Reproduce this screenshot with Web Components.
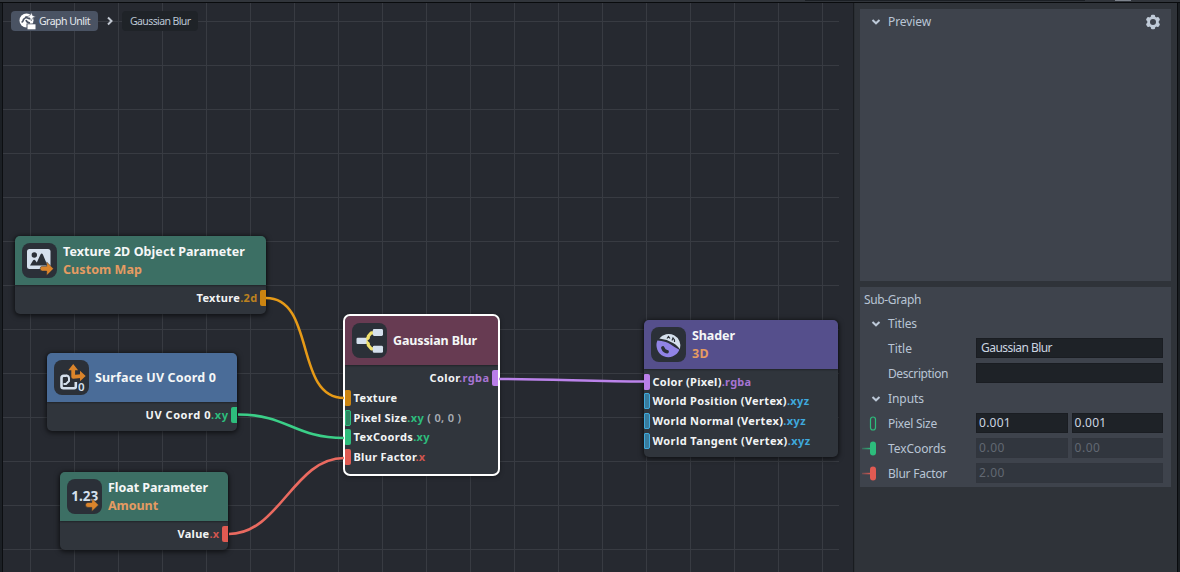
<!DOCTYPE html>
<html lang="en">
<head>
<meta charset="utf-8">
<title>Shader graph</title>
<style>
html,body{margin:0;height:100%;overflow:hidden;background:#2d3137}
body{font-family:"Noto Sans",sans-serif}
</style>
</head>
<body>
<graph-app></graph-app>
<script>
const define = (name, html, setup) => customElements.define(name, class extends HTMLElement {
  connectedCallback() {
    if (this.shadowRoot) return;
    const t = document.createElement('template');
    t.innerHTML = typeof html === 'function' ? html(this) : html;
    this.attachShadow({mode: 'open'}).append(t.content.cloneNode(true));
    if (setup) setup(this);
  }
});

/* glyphs, each drawn inside a 35px tile */
const icons = {
  image: `<rect x="5" y="6" width="23.500" height="20" rx="2.500" fill="#d5e0ed"/><circle cx="12.300" cy="12" r="2.700" fill="#2b3038"/><path d="M8 22.500l3-5q1.200-1.500 2.400 0l1.400 2 3.700-8q1.200-2 2.400 0l4.600 11z" fill="#2b3038"/><path d="M20.500 23.300h4.200v-4.300l6.800 6.700-6.800 6.700v-4.300h-4.200a2.400 2.400 0 0 1 0-4.800z" fill="#da842b" stroke="#2b3038" stroke-width=".5"/>`,
  uv: `<path d="M12.500 15.700H9.700q-2.200 0-2.200 2.200v8.300q0 2 2 2h10.700q1.600 0 1.600-1.600V22" fill="none" stroke="#d5e0ed" stroke-width="2.600"/><path d="M12 15.500q3 0 3 3v2.500l-3 3h-2.500" fill="none" stroke="#d5e0ed" stroke-width="2"/><circle cx="11.800" cy="19" r="1.500" fill="#2b3038"/><path d="M19.200 9.500v7.300q0 0 7.500-.6" stroke="#da842b" stroke-width="3.800" stroke-linejoin="round" fill="none"/><path d="M19.200 4l4.900 6.200h-9.800zM31.700 16l-5.700 5.200v-10.400z" fill="#da842b"/><text x="24" y="30.800" font-size="11.500" font-weight="600" font-family="Noto Sans" fill="#d5e0ed">0</text>`,
  number: `<text x="4.200" y="22" font-size="13.500" font-weight="700" font-family="Noto Sans" fill="#d5e0ed" textLength="27" lengthAdjust="spacingAndGlyphs">1.23</text><path d="M21 23.400h3.800v-4.200l6.800 6.700-6.800 6.700v-4.200H21a2.500 2.500 0 0 1 0-5z" fill="#da842b" stroke="#2b3038" stroke-width=".6"/>`,
  branch: `<path d="M13 17.800l3.300-3v-1.500l3-3.500h2.500M13 17.800l3.300 3v1.500l3 3.500h2.500" fill="none" stroke="#efdf6c" stroke-width="3.200" stroke-linejoin="round"/><g fill="#d5e0ed"><rect x="4.500" y="14.800" width="10" height="6.200" rx="1.200"/><rect x="20.800" y="6" width="10.200" height="7" rx="1.400"/><rect x="20.800" y="22.800" width="10.200" height="7" rx="1.400"/></g>`,
  shader: `<path d="M8.300 11.600A11.800 11.800 0 0 1 28.900 22.300Q27.500 19.500 22.500 16.200 16 12.500 8.300 11.600z" fill="#d5e0ed"/><path d="M16 11.500l1.500-2 1.500 2M21 13.500l1-2.500 1.500 2v2" fill="none" stroke="#2b3038" stroke-width="1.200"/><path d="M6.400 13.500Q15 14 19 17q4.500 3.300 9.400 5.800A11.700 11.700 0 0 1 6.400 13.500z" fill="#9184e6"/><path d="M11.800 20.800q1.300 3.600 4.400 3.900" fill="none" stroke="#2b3038" stroke-width="3.400" stroke-linecap="round"/>`
};
const hues = {green: '#3c6f64', blue: '#4a6c98', plum: '#673b52', violet: '#554f8c'};

/* app frame */
define('graph-app', `
<style>
:host{display:flex;flex-direction:column;width:1180px;height:572px;background:#2e3238}
.top{height:2px;flex:none;background:#31353b;display:flex;justify-content:flex-end}
.top i{display:block;height:1px;background:#1c2025;width:280px;margin-right:30px}
.top b{display:block;height:1px;width:16px;background:#7d838c;margin-right:49px}
.main{flex:1;display:flex;border-top:1px solid #090b0d;min-height:0}
.edge{width:3px;background:linear-gradient(90deg,#1b1f24 2px,#0c0e11 2px)}
graph-canvas{flex:1}
side-panel{width:324px;flex:none}
.right{width:3px;background:linear-gradient(90deg,#090b0e 1px,#1a1e22 1px)}
</style>
<div class="top"><i></i><b></b></div>
<div class="main"><div class="edge"></div><graph-canvas></graph-canvas><side-panel></side-panel><div class="right"></div></div>`);

/* node canvas; child coordinates are in window space */
define('graph-canvas', `
<style>
:host{display:block;position:relative;overflow:hidden;background:#262930}
.space{position:absolute;left:-3px;top:-3px;width:860px;height:572px}
.grid,.wires{position:absolute;left:0;top:0}
.crumbs{position:absolute;left:11px;top:11px;display:flex;align-items:center}
.crumbs>svg{width:8px;height:10px;margin:0 8px 0 8px}
graph-node{position:absolute}
</style>
<div class="space">
<svg class="grid" width="860" height="572"><defs><pattern id="g" x="30" y="21" width="44" height="44" patternUnits="userSpaceOnUse"><path d="M0 0h44v1H0zM0 0h1v44H0z" fill="#383b42"/></pattern></defs><rect width="839" height="572" fill="url(#g)"/></svg>
<div class="crumbs"><crumb-item icon w="51">Graph Unlit</crumb-item>
<svg viewBox="0 0 8 10"><path d="M2 1.500L5.500 5 2 8.500" fill="none" stroke="#c2c8d2" stroke-width="2"/></svg>
<crumb-item plain w="60.500">Gaussian Blur</crumb-item></div>
<graph-node style="left:15px;top:236px;width:251px" hue="green" icon="image"><fit-text slot="title" w="182">Texture 2D Object Parameter</fit-text><fit-text slot="sub" w="79">Custom Map</fit-text>
<pin-row out color="#cb8411" w="61" text="Texture" type=".2d" tint="#bd821f"></pin-row></graph-node>
<graph-node style="left:47px;top:353px;width:190px" hue="blue" icon="uv"><fit-text slot="title" w="121">Surface UV Coord 0</fit-text>
<pin-row out color="#2dbd7c" w="83" text="UV Coord 0" type=".xy"></pin-row></graph-node>
<graph-node style="left:60px;top:472px;width:168px" hue="green" icon="number"><fit-text slot="title" w="100">Float Parameter</fit-text><fit-text slot="sub" w="50">Amount</fit-text>
<pin-row out color="#e05a52" w="42" text="Value" type=".x" tint="#d0564f"></pin-row></graph-node>
<graph-node selected style="left:345px;top:316px;width:153px" hue="plum" icon="branch"><fit-text slot="title" w="84">Gaussian Blur</fit-text>
<pin-row out color="#b97ee8" w="60" text="Color" type=".rgba" tint="#a674d2"></pin-row>
<pin-row color="#cb8411" w="44" text="Texture"></pin-row>
<pin-row hollow color="#2dbd7c" w="108" text="Pixel Size" type=".xy" note=" ( 0, 0 )"></pin-row>
<pin-row color="#2dbd7c" w="76.500" text="TexCoords" type=".xy"></pin-row>
<pin-row color="#e05a52" w="72" text="Blur Factor" type=".x" tint="#d0564f"></pin-row></graph-node>
<graph-node style="left:644px;top:320px;width:194px" hue="violet" icon="shader"><fit-text slot="title" w="43">Shader</fit-text><fit-text slot="sub" w="17">3D</fit-text>
<pin-row color="#b97ee8" w="99" text="Color (Pixel)" type=".rgba" tint="#a674d2"></pin-row>
<pin-row hollow color="#3fa9dc" w="157" text="World Position (Vertex)" type=".xyz"></pin-row>
<pin-row hollow color="#3fa9dc" w="153.500" text="World Normal (Vertex)" type=".xyz"></pin-row>
<pin-row hollow color="#3fa9dc" w="158" text="World Tangent (Vertex)" type=".xyz"></pin-row></graph-node>
<svg class="wires" width="860" height="572" fill="none" stroke-width="2.600">
<path d="M266 298C316 298 294 398 344 398" stroke="#e69a17"/>
<path d="M238 414.500C288 414.500 294 438 344 438" stroke="#3bcf88"/>
<path d="M229 534C279 534 294 458 344 458" stroke="#ea6a60"/>
<path d="M499 379C550 379 594 381.500 645 381.500" stroke="#bb83ea"/></svg>
</div>`);

define('crumb-item', el => `
<style>
:host{display:flex;align-items:center;height:20px;border-radius:4px;padding:0 8px;background:#4a5363;color:#e8ebf0;font-size:10.500px;white-space:nowrap;box-sizing:border-box}
:host([plain]){background:#1f2328;color:#bcc6d4;padding:0 7px 0 8px}
svg{width:18px;height:18px;margin-right:2px}
</style>
${el.hasAttribute('icon') ? `<svg viewBox="0 0 18 18"><circle cx="7.500" cy="8.500" r="7" fill="#fff"/><path d="M2.500 10q1.500 0 2-2.500l3.500-3M7 8q.500 2.500 4 3M6 5l5 2" fill="none" stroke="#4a5363" stroke-width="1.600"/><path d="M12.300.5l1.300 3 3 1.200-3 1.200-1.300 3-1.300-3-3-1.200 3-1.200z" fill="#fff" stroke="#4a5363" stroke-width=".5"/><rect x="7.500" y="11.500" width="9.500" height="6" fill="#4a5363"/><rect x="8.500" y="12.300" width="8" height="5" fill="#fff"/></svg>` : ''}
<fit-text w="${el.getAttribute('w')}"><slot></slot></fit-text>`);

define('graph-node', el => `
<style>
:host{display:block;border-radius:5px;background:#30353c;box-shadow:0 1px 5px 1px #0009;font-weight:700}
:host([selected]){outline:2px solid #fff;outline-offset:0}
header{height:49px;box-sizing:border-box;border-radius:5px 5px 0 0;background:${hues[el.getAttribute('hue')]};display:flex;align-items:center;padding:0 7px;gap:6px;box-shadow:0 1px 2px #0005}
.tile{width:35px;height:35px;border-radius:8px;background:#2b3038;flex:none}
.names{display:flex;flex-direction:column;align-items:flex-start;font-size:12.500px;line-height:17.500px;color:#f5f7f7}
::slotted([slot=sub]){color:#e59b62}
section{padding:2.700px 0 6.300px}
:host([selected]) section{padding:3.200px 0 6.800px}
</style>
<header><svg class="tile" viewBox="0 0 35 35">${icons[el.getAttribute('icon')]}</svg>
<div class="names"><slot name="title"></slot><slot name="sub"></slot></div></header>
<section><slot></slot></section>`);

define('pin-row', el => {
  const a = n => el.getAttribute(n) || '', c = a('color');
  return `
<style>
:host{display:flex;align-items:center;height:19.800px;gap:2.500px;font-size:11px;line-height:16px;color:#f2f4f5}
:host([out]){flex-direction:row-reverse;padding:0}
i{width:6px;height:16px;box-sizing:border-box;border-radius:1px 2px 2px 1px;background:${c};flex:none}
:host([out]) i{border-radius:2px 0 0 2px}
:host([hollow]) i{border:1px solid ${c};background:color-mix(in srgb,${c} 60%,#30353c)}
.type{color:${a('tint') || c}}
.note{color:#a9aeb5;font-weight:600}
</style>
<i></i><fit-text w="${a('w')}">${a('text')}<span class="type">${a('type')}</span><span class="note">${a('note')}</span></fit-text>`;
});

const chevron = `<svg class="chev" viewBox="0 0 10 6"><path d="M1.500 1L5 4.300 8.500 1" fill="none" stroke="#bdc9d8" stroke-width="2"/></svg>`;

/* inspector column */
define('side-panel', `
<style>
:host{display:flex;flex-direction:column;gap:6px;border-left:1px solid #191c20;box-shadow:inset 1px 0 #2a2e33;padding:6px 6px 0 6px;box-sizing:border-box;background:#2f3339;color:#b9c5d5;font-size:12px;line-height:16px}
.card{background:#3e434c;box-sizing:border-box}
.preview{height:272px}
.sub{height:200px}
.bar{display:flex;align-items:center;height:25px;padding:0 10px 0 11px}
.bar fit-text{margin-left:7px}
.chev{width:10px;height:6px;flex:none}
.gear{width:16px;height:16px;margin-left:auto}
.name{height:24px;box-sizing:border-box;display:flex;align-items:center;padding:1px 0 0 4px}
</style>
<div class="card preview"><div class="bar">${chevron}<fit-text w="43">Preview</fit-text>
<svg class="gear" viewBox="-8 -8 16 16"><g fill="#c0cbd8"><circle r="5.800"/><rect x="-2.100" y="-7.300" width="4.200" height="14.600" rx="1.400"/><rect x="-2.100" y="-7.300" width="4.200" height="14.600" rx="1.400" transform="rotate(60)"/><rect x="-2.100" y="-7.300" width="4.200" height="14.600" rx="1.400" transform="rotate(120)"/></g><circle r="3" fill="#3e434c"/></svg></div></div>
<div class="card sub">
<div class="name"><fit-text w="57">Sub-Graph</fit-text></div>
<prop-row fold label="Titles" w="29"></prop-row>
<prop-row label="Title" w="24" values="Gaussian Blur:71"></prop-row>
<prop-row label="Description" w="60" values=" :0"></prop-row>
<prop-row fold label="Inputs" w="36"></prop-row>
<prop-row pin="#2dbd7c" hollow label="Pixel Size" w="49" values="0.001:32,0.001:32"></prop-row>
<prop-row pin="#2dbd7c" off label="TexCoords" w="58" values="0.00:26,0.00:26"></prop-row>
<prop-row pin="#e05a52" off label="Blur Factor" w="59" values="2.00:26"></prop-row>
</div>`);

define('prop-row', el => {
  const c = el.getAttribute('pin'), hollow = el.hasAttribute('hollow');
  const mark = c ? (hollow
    ? `<svg viewBox="0 0 28 25"><rect x="10.500" y="6" width="5" height="13" rx="2.500" fill="none" stroke="${c}" stroke-width="1.200"/></svg>`
    : `<svg viewBox="0 0 28 25"><defs><linearGradient id="f"><stop stop-color="${c}" stop-opacity=".3"/><stop offset="1" stop-color="${c}"/></linearGradient></defs><rect x="2" y="11.800" width="9" height="1.500" fill="url(#f)"/><rect x="10" y="5.500" width="6" height="14" rx="3" fill="${c}"/></svg>`)
    : el.hasAttribute('fold') ? chevron : '';
  const fields = (el.getAttribute('values') || '').split(',').filter(Boolean).map(v => {
    const [t, w] = v.split(':');
    return `<div class="field">${t.trim() ? `<fit-text w="${w}">${t}</fit-text>` : ''}</div>`;
  }).join('');
  return `
<style>
:host{display:flex;height:25px;align-items:center}
.mark{width:28px;height:25px;flex:none;display:flex;align-items:center}
.mark svg{width:28px;height:25px;flex:none}
.mark .chev{width:10px;height:6px;margin-left:11px}
.label{width:88px;flex:none}
.fields{display:flex;gap:4px;flex:1;margin:-1px 8px 0 0}
.field{flex:1;height:20px;box-sizing:border-box;padding-left:${/[a-z]/i.test(fields.replace(/<[^>]*>/g, '')) ? 4 : 2}px;background:#1e2227;border:1px solid #1a1d22;display:flex;align-items:center;color:#ccd5e1}
:host([off]) .field{background:#31363e;border-color:#31353d;color:#616872}
</style>
<div class="mark">${mark}</div><div class="label"><fit-text w="${el.getAttribute('w')}">${el.getAttribute('label')}</fit-text></div>${fields ? `<div class="fields">${fields}</div>` : ''}`;
});

/* spaces its letters so that the run takes w pixels */
customElements.define('fit-text', class extends HTMLElement {
  connectedCallback() {
    if (this.shadowRoot) return;
    this.attachShadow({mode: 'open'}).innerHTML = '<style>:host{display:inline-block;white-space:pre;flex:none}</style><slot></slot>';
    const host = this.getRootNode().host;
    const text = this.textContent || (host ? host.textContent : '');
    const want = +this.getAttribute('w'), have = this.getBoundingClientRect().width;
    if (want && have && text.length) this.style.letterSpacing = ((want - have) / text.length).toFixed(3) + 'px';
  }
});
</script>
</body>
</html>
